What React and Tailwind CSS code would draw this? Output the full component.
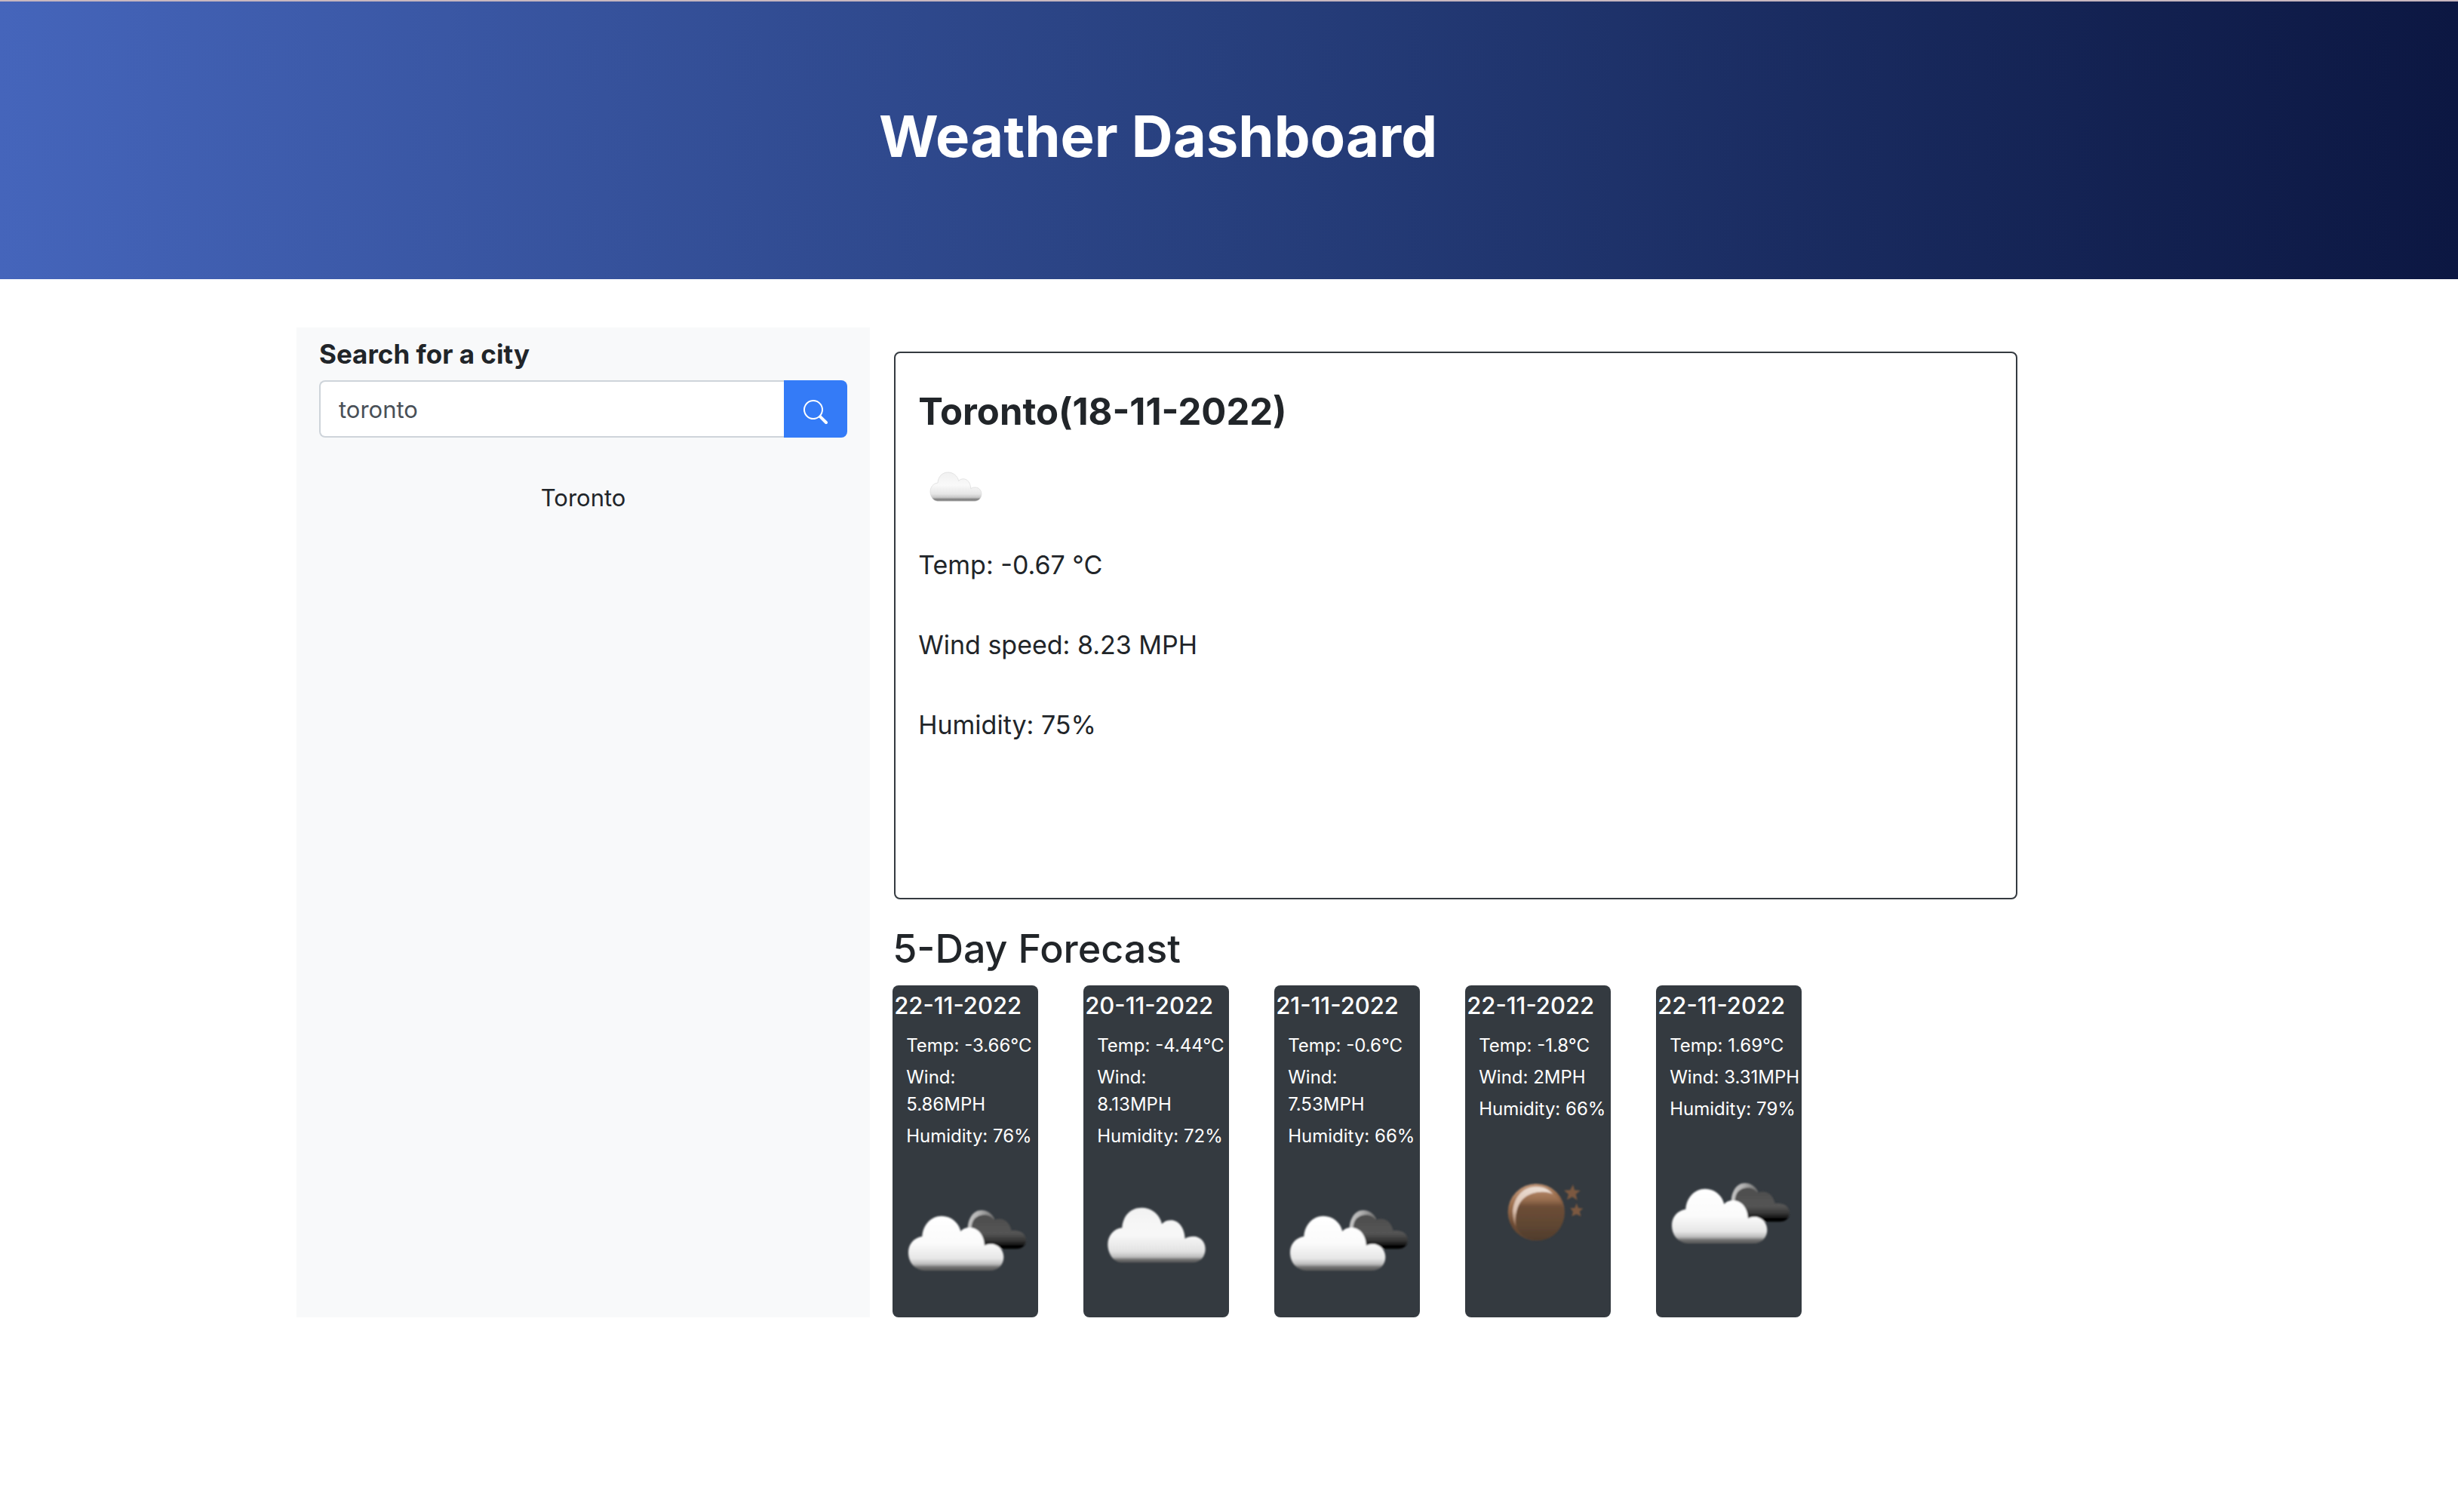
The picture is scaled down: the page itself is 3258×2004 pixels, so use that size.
import React, { useId } from "react";

const CLOUD =
  "M110 250 C76 250 55 212 55 178 C55 145 78 115 112 112 C115 65 145 32 190 32 C228 32 262 58 270 97 C280 86 292 82 307 82 C335 82 360 110 362 155 C372 148 382 146 395 146 C425 146 443 170 443 195 C443 225 425 250 392 250 Z";

function CloudFill({ id }) {
  return (
    <linearGradient id={id} x1="0" y1="0" x2="0" y2="1">
      <stop offset="0" stopColor="#f2f2f2" />
      <stop offset="0.5" stopColor="#f8f8f8" />
      <stop offset="0.8" stopColor="#e2e2e2" />
      <stop offset="0.9" stopColor="#bcbcbc" />
      <stop offset="0.95" stopColor="#6a6a6a" />
      <stop offset="1" stopColor="#5c5c5c" />
    </linearGradient>
  );
}

function Soften({ id }) {
  return (
    <filter id={id} x="-10%" y="-10%" width="120%" height="120%">
      <feGaussianBlur stdDeviation="2.4" />
    </filter>
  );
}

function SmallCloud() {
  const id = useId();
  return (
    <svg viewBox="0 0 100 100" className="block size-[100px]" role="img" aria-label="Cloudy">
      <defs>
        <linearGradient id={id + "c"} x1="0" y1="0" x2="0" y2="1">
          <stop offset="0" stopColor="#f1f1f1" />
          <stop offset="0.45" stopColor="#f9f9f9" />
          <stop offset="0.75" stopColor="#e6e6e6" />
          <stop offset="0.87" stopColor="#c8c8c8" />
          <stop offset="0.94" stopColor="#808080" />
          <stop offset="1" stopColor="#8a8a8a" />
        </linearGradient>
        <Soften id={id + "s"} />
      </defs>
      <g transform="translate(6.4 24.4) scale(.175)">
        <path d={CLOUD} fill={`url(#${id}c)`} stroke="#d4d4d4" strokeWidth="5" strokeOpacity="0.7" filter={`url(#${id}s)`} />
      </g>
    </svg>
  );
}

function Clouds() {
  const id = useId();
  return (
    <svg viewBox="0 0 193 200" className="block w-full" role="img" aria-label="Broken clouds">
      <defs>
        <linearGradient id={id + "w"} x1="0" y1="0" x2="0" y2="1">
          <stop offset="0" stopColor="#ffffff" />
          <stop offset="0.5" stopColor="#fbfbfb" />
          <stop offset="0.78" stopColor="#e6e6e6" />
          <stop offset="0.88" stopColor="#bdbdbd" />
          <stop offset="0.94" stopColor="#6c6c6c" />
          <stop offset="1" stopColor="#5c5c5c" />
        </linearGradient>
        <linearGradient id={id + "d"} x1="0" y1="0" x2="0" y2="1">
          <stop offset="0" stopColor="#4e4e4e" />
          <stop offset="0.55" stopColor="#545454" />
          <stop offset="0.78" stopColor="#303030" />
          <stop offset="0.92" stopColor="#020202" />
          <stop offset="1" stopColor="#0a0a0a" />
        </linearGradient>
        <linearGradient id={id + "r"} x1="0" y1="0" x2="1" y2="0">
          <stop offset="0" stopColor="#c4c4c4" />
          <stop offset="0.4" stopColor="#b4b4b4" />
          <stop offset="1" stopColor="#6a6a6a" />
        </linearGradient>
        <Soften id={id + "s"} />
      </defs>
      <g transform="translate(7 56) scale(.3333)" filter={`url(#${id}s)`}>
        <path d="M278 150 C278 105 300 72 333 72 C355 72 374 84 386 108 L345 110 L300 150 Z" fill={`url(#${id}r)`} />
        <path
          d="M294 160 C288 116 308 91 345 91 C360 91 374 98 384 111 C415 98 444 116 452 153 C485 148 510 165 510 190 C510 212 495 226 470 226 L345 226 Z"
          fill={`url(#${id}d)`}
        />
        <path
          d="M110 312 C68 312 42 280 42 240 C42 208 62 182 97 176 C100 130 132 95 174 95 C212 95 242 120 250 156 C258 146 270 141 285 141 C318 141 343 170 345 212 C352 208 360 206 370 206 C400 206 421 230 421 258 C421 288 400 312 368 312 Z"
          fill={`url(#${id}w)`}
        />
      </g>
    </svg>
  );
}

function Cloud() {
  const id = useId();
  return (
    <svg viewBox="0 0 193 200" className="block w-full" role="img" aria-label="Scattered clouds">
      <defs>
        <CloudFill id={id + "c"} />
        <Soften id={id + "s"} />
      </defs>
      <g transform="translate(14 66) scale(.3333)">
        <path d={CLOUD} fill={`url(#${id}c)`} filter={`url(#${id}s)`} />
      </g>
    </svg>
  );
}

function Moon() {
  const id = useId();
  return (
    <svg viewBox="0 0 193 200" className="block w-full" role="img" aria-label="Clear night">
      <defs>
        <linearGradient id={id + "o"} x1="0.35" y1="0" x2="0.6" y2="1">
          <stop offset="0" stopColor="#c59a7c" />
          <stop offset="0.3" stopColor="#9a6d4c" />
          <stop offset="0.6" stopColor="#6b4b35" />
          <stop offset="1" stopColor="#5a412f" />
        </linearGradient>
        <linearGradient id={id + "i"} x1="0" y1="0" x2="0" y2="1">
          <stop offset="0" stopColor="#b08262" />
          <stop offset="0.18" stopColor="#946a4c" />
          <stop offset="0.3" stopColor="#6d4e37" />
          <stop offset="0.7" stopColor="#5f4632" />
          <stop offset="1" stopColor="#503c2c" />
        </linearGradient>
        <linearGradient id={id + "r"} x1="0.2" y1="0" x2="0" y2="1">
          <stop offset="0" stopColor="#eadbd0" />
          <stop offset="0.6" stopColor="#d9bfae" />
          <stop offset="1" stopColor="#8d6548" />
        </linearGradient>
        <Soften id={id + "s"} />
      </defs>
      <g transform="translate(39 62) scale(.3333)" filter={`url(#${id}s)`}>
        <circle cx="166" cy="170" r="113" fill={`url(#${id}o)`} />
        <path d="M84 228 C52 160 88 66 168 68 C196 68 218 80 234 100 C180 76 122 96 98 140 C84 166 82 198 84 228 Z" fill={`url(#${id}r)`} />
        <path d="M92 240 C78 180 88 132 128 106 C164 84 214 84 244 104 C276 134 284 180 268 218 C248 264 206 284 166 281 C134 280 108 266 92 240 Z" fill={`url(#${id}i)`} />
        <path d="M312 60 L318 82 L341 84 L323 98 L329 122 L309 109 L288 121 L294 98 L276 83 L301 82 Z" fill="#7b583f" />
        <path d="M326 134 L333 153 L352 155 L338 167 L344 187 L326 178 L307 186 L312 168 L301 154 L319 153 Z" fill="#7b583f" />
      </g>
    </svg>
  );
}

const DAYS = [
  { date: "22-11-2022", lines: ["Temp: -3.66°C", "Wind:\n5.86MPH", "Humidity: 76%"], Icon: Clouds },
  { date: "20-11-2022", lines: ["Temp: -4.44°C", "Wind:\n8.13MPH", "Humidity: 72%"], Icon: Cloud },
  { date: "21-11-2022", lines: ["Temp: -0.6°C", "Wind:\n7.53MPH", "Humidity: 66%"], Icon: Clouds },
  { date: "22-11-2022", lines: ["Temp: -1.8°C", "Wind: 2MPH", "Humidity: 66%"], Icon: Moon },
  { date: "22-11-2022", lines: ["Temp: 1.69°C", "Wind: 3.31MPH", "Humidity: 79%"], Icon: Clouds },
];

export default function App() {
  return (
    <div className="min-h-screen bg-white font-['Inter',sans-serif] text-[#212529]">
      <header className="border-t-2 border-[#c8b7bf] bg-linear-to-r from-[#4565bb] via-[#273f7d] to-[#0c1742] pt-[126px] pb-[138px]">
        <h1 className="pl-[1165px] text-[76px] leading-[104px] font-bold text-white">Weather Dashboard</h1>
      </header>
      <div className="ml-[393px] flex w-[70%] pt-16">
        <aside className="w-1/3 shrink-0 bg-[#f8f9fa] px-[30px] pt-3">
          <form onSubmit={(e) => e.preventDefault()}>
            <label htmlFor="city" className="block text-[35px] leading-[46px] font-bold">
              Search for a city
            </label>
            <div className="mt-3 flex h-[76px]">
              <input
                id="city"
                defaultValue="toronto"
                className="min-w-0 flex-1 rounded-l-lg border-2 border-r-0 border-[#ced4da] bg-white px-6 pt-0.5 text-[31px] text-[#495057] outline-none"
              />
              <button
                type="submit"
                aria-label="Search"
                className="flex w-[84px] items-center justify-center rounded-r-lg bg-[#347bf7] pt-2 text-white"
              >
                <svg viewBox="0 0 16 16" className="size-8" fill="currentColor" aria-hidden="true">
                  <path d="M11.742 10.344a6.5 6.5 0 1 0-1.397 1.398h-.001c.03.04.062.078.098.115l3.85 3.85a1 1 0 0 0 1.415-1.414l-3.85-3.85a1.007 1.007 0 0 0-.115-.1zM12 6.5a5.5 5.5 0 1 1-11 0 5.5 5.5 0 0 1 11 0z" />
                </svg>
              </button>
            </div>
          </form>
          <p className="mt-14 text-center text-[31px] leading-[48px]">Toronto</p>
        </aside>
        <main className="min-w-0 flex-1 pt-8 pl-[30px]">
          <section className="ml-0.5 h-[726px] rounded-lg border-2 border-[#343a40] px-[30px] pt-12">
            <h2 className="text-[49px] leading-[60px] font-bold">Toronto(18-11-2022)</h2>
            <div className="mt-5">
              <SmallCloud />
            </div>
            <div className="mt-[26px] flex flex-col gap-[52px] text-[34px] leading-[54px]">
              <p>Temp: -0.67 °C</p>
              <p>Wind speed: 8.23 MPH</p>
              <p>Humidity: 75%</p>
            </div>
          </section>
          <h2 className="mt-8 text-[52px] leading-[68px] font-medium">5-Day Forecast</h2>
          <div className="mt-3.5 flex gap-[60px]">
            {DAYS.map(({ date, lines, Icon }, i) => (
              <article key={i} className="h-[440px] w-[193px] shrink-0 rounded-lg bg-[#343a40] pt-2 text-white">
                <h3 className="pl-0.5 text-[31px] leading-[38px] font-medium">{date}</h3>
                <ul className="mt-4 flex flex-col gap-1.5 pl-[18px] text-[24px] leading-9 whitespace-pre">
                  {lines.map((l) => (
                    <li key={l}>{l}</li>
                  ))}
                </ul>
                <Icon />
              </article>
            ))}
          </div>
        </main>
      </div>
    </div>
  );
}
